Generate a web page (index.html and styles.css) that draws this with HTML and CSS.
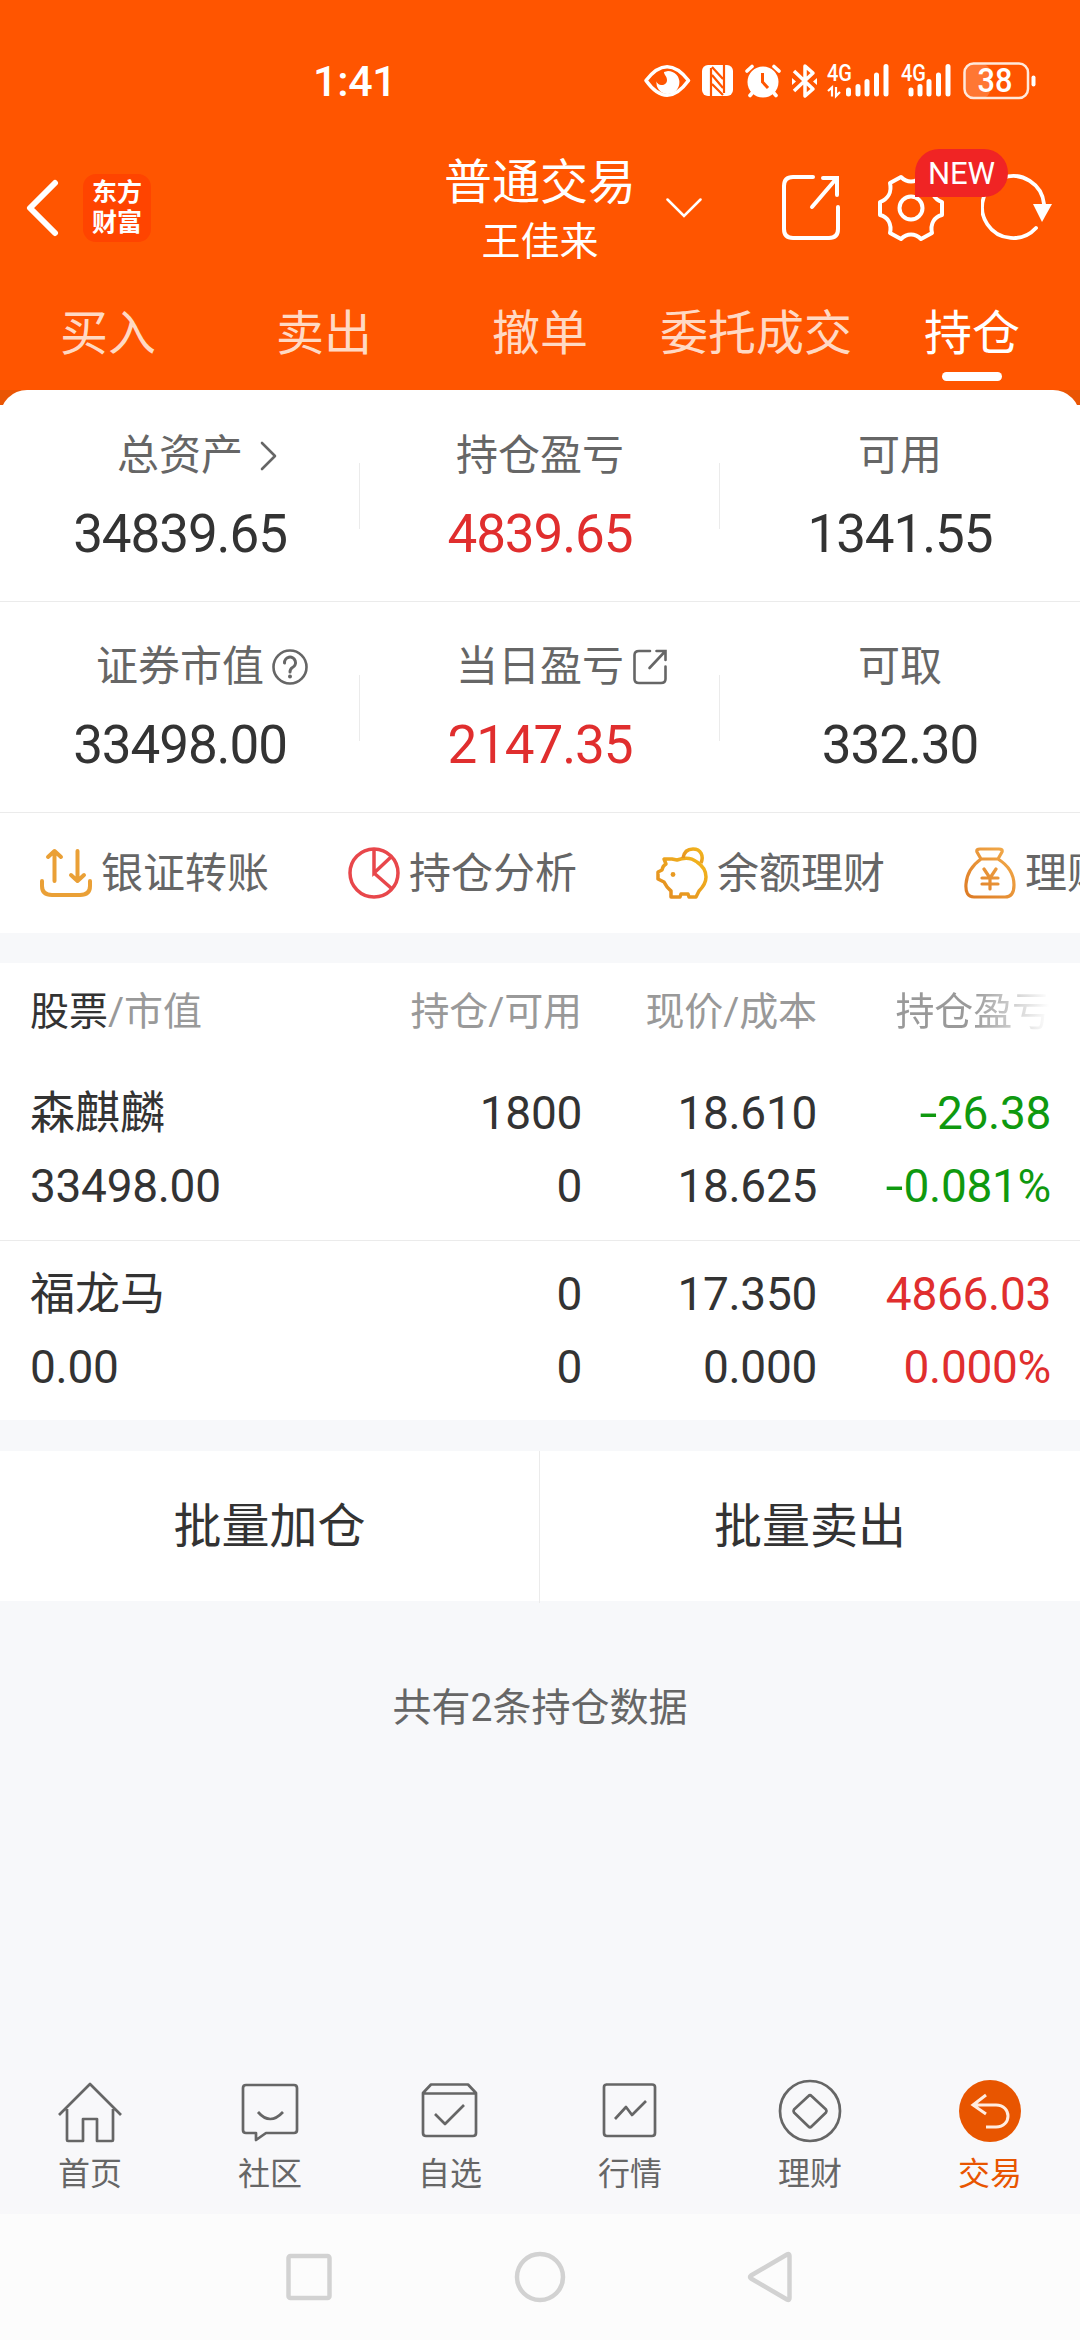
FILE: index.html
```html
<!DOCTYPE html>
<html lang="zh-CN">
<head>
<meta charset="utf-8">
<title>普通交易 - 持仓</title>
<link rel="stylesheet" href="styles.css">
</head>
<body>
<header class="top">
  <div class="status">
    <span class="clock">1:41</span>
    <svg class="status-icons" viewBox="640 55 400 50" fill="#fff">
      <path d="M646 80.500Q667 53 688.500 80.500Q667 110 646 80.500Z" fill="none" stroke="#fff" stroke-width="3.600" stroke-linejoin="round"/>
      <path d="M668 71A11.500 11.500 0 1 1 656.500 81C657 86 667 87 667 80C667 76 664 75 664 72Z"/>
      <rect x="702" y="65" width="31" height="31" rx="6"/>
      <path d="M711 68V96M724 65V93M712 67L723 79M712 75L723 88M712 84L723 95" stroke="#f50" stroke-width="2.200" fill="none"/>
      <circle cx="763" cy="82" r="15.500"/>
      <path d="M747 71L752 66.500M779 71L774 66.500M753 92L750 95.500M773 92L776 95.500" stroke="#fff" stroke-width="3.600" stroke-linecap="round"/>
      <path d="M762.500 73V82L768 88" stroke="#f50" stroke-width="3" fill="none"/>
      <path d="M794 71L813 89L805 96V66L813 73L794 91" fill="none" stroke="#fff" stroke-width="3.500" stroke-linejoin="round"/>
      <path d="M792 78L796 81.500L792 85ZM817 78L813 81.500L817 85Z"/>
      <text x="827" y="80.500" class="net" textLength="25" lengthAdjust="spacingAndGlyphs">4G</text>
      <path d="M828 91L832 87.500V96.500M836 87V96L840 92" fill="none" stroke="#fff" stroke-width="2.200"/>
      <path d="M848.500 90V94M858 86.500V94M867 81.500V94M876.500 75V94M886 66.500V94" stroke="#fff" stroke-width="5" stroke-linecap="round"/>
      <text x="901" y="80.500" class="net" textLength="25" lengthAdjust="spacingAndGlyphs">4G</text>
      <path d="M911 90V94M920 86.500V94M929 81.500V94M938.500 75V94M948 66.500V94" stroke="#fff" stroke-width="5" stroke-linecap="round"/>
      <rect x="965" y="64" width="25" height="34" rx="8" fill-opacity=".2"/>
      <rect x="964.500" y="63.500" width="63.500" height="34.500" rx="9" fill="none" stroke="#ffe9dc" stroke-width="2.500"/>
      <rect x="1031.500" y="75.500" width="4" height="11" rx="2"/>
      <text x="977.500" y="91.500" class="batt" textLength="35" lengthAdjust="spacingAndGlyphs">38</text>
    </svg>
  </div>
  <div class="titlebar">
    <div class="title-left">
      <svg class="back" viewBox="0 0 34 58"><path d="M29 4L4 29L29 54" fill="none" stroke="#fff" stroke-width="6" stroke-linecap="round" stroke-linejoin="round"/></svg>
      <div class="logo"><span>东方</span><span>财富</span></div>
    </div>
    <div class="title-mid">
      <div class="title">普通交易</div>
      <div class="account">王佳来</div>
    </div>
    <div class="title-right">
      <svg class="caret" viewBox="0 0 36 20"><path d="M1.500 1.500L18 18L34.500 1.500" fill="none" stroke="#fff" stroke-width="2.500" stroke-linecap="round"/></svg>
      <svg class="share" viewBox="0 0 60 68" fill="none" stroke="#fff" stroke-width="4" stroke-linecap="round"><path d="M32 3H12Q3 3 3 12V55Q3 64 12 64H48Q57 64 57 55V33M42 4H56V21M55 5L31 33"/></svg>
      <div class="gear-wrap">
        <svg class="gear" viewBox="0 0 68 68" fill="none" stroke="#fff" stroke-width="4" stroke-linejoin="round"><path d="M24 3C30 9 38 9 44 3L55 9C53 18 57 25 65 28V41C57 43 53 50 55 59L44 65C38 59 30 59 24 65L13 59C15 50 11 43 3 41V28C11 25 15 18 13 9Z"/><circle cx="34" cy="34" r="11.500"/></svg>
        <span class="new">NEW</span>
      </div>
      <svg class="refresh" viewBox="0 0 72 70"><path d="M55 55A31 31 0 1 1 63 31" fill="none" stroke="#fff" stroke-width="3.800" stroke-linecap="round"/><path d="M52 31H71L61 49Z" fill="#fff"/></svg>
    </div>
  </div>
  <nav class="tabs">
    <span>买入</span><span>卖出</span><span>撤单</span><span>委托成交</span><span class="on">持仓</span>
  </nav>
</header>

<div class="panel-wrap">
<section class="panel">
  <div class="sum">
    <div class="cell"><div class="label"><span>总资产</span><svg class="chev" viewBox="0 0 18 30"><path d="M2 2L15 15L2 28" fill="none" stroke="#666" stroke-width="2.600" stroke-linecap="round" stroke-linejoin="round"/></svg></div><div class="num">34839.65</div></div>
    <div class="cell"><div class="label"><span>持仓盈亏</span></div><div class="num red">4839.65</div></div>
    <div class="cell"><div class="label"><span>可用</span></div><div class="num">1341.55</div></div>
  </div>
  <div class="sum">
    <div class="cell"><div class="label"><span>证券市值</span><svg class="help" viewBox="0 0 36 36" fill="none" stroke="#666"><circle cx="18" cy="18" r="16.500" stroke-width="2.600"/><path d="M12.500 14A5.500 5.500 0 1 1 20.500 18.500Q18 20 18 23" stroke-width="3" stroke-linecap="round"/><circle cx="18" cy="27.500" r="2" fill="#666" stroke="none"/></svg></div><div class="num">33498.00</div></div>
    <div class="cell"><div class="label"><span>当日盈亏</span><svg class="ext" viewBox="0 0 34 36" fill="none" stroke="#666" stroke-width="2.600" stroke-linecap="round"><path d="M17 2H6Q1.500 2 1.500 6V30Q1.500 34 6 34H28Q32.500 34 32.500 30V17.500M23.500 2H32.500V11M31.500 3L16.500 19"/></svg></div><div class="num red">2147.35</div></div>
    <div class="cell"><div class="label"><span>可取</span></div><div class="num">332.30</div></div>
  </div>
  <div class="quick">
    <div class="q"><svg viewBox="0 0 52 52" fill="none" stroke="#eaa036" stroke-width="4" stroke-linecap="round" stroke-linejoin="round"><path d="M2 34V39Q2 48 12 48H40Q50 48 50 39V34M14.500 34V4M8 10L14.500 4L21 10M37.500 4V34M31 28L37.500 34L44 28"/></svg><span>银证转账</span></div>
    <div class="q"><svg viewBox="0 0 52 52" fill="none" stroke="#e8474b" stroke-width="3.500"><circle cx="26" cy="26" r="24"/><path d="M26 2V26L43 10M26 26L43 41"/></svg><span>持仓分析</span></div>
    <div class="q"><svg viewBox="0 0 52 52" fill="none" stroke="url(#pig)" stroke-width="3.500" stroke-linejoin="round"><defs><linearGradient id="pig" x1="1" y1="0" x2="0" y2="1"><stop offset="0" stop-color="#f3b71c"/><stop offset="1" stop-color="#e28a22"/></linearGradient></defs><path d="M8 12H16L21 13C29 10 36 11 41 15C47 19 50 24 50 30C50 36 46 41 43 44L40 50H33L32 47H25L24 50H15V44C11 41 9 37 8 35L2 32V25L6 23C7 18 9 18 10 17Z"/><path d="M27 11C28 5 32 2 37 2C45 2 48 9 45 16"/><circle cx="17" cy="27.500" r="2.400" fill="#e89a22" stroke="none"/></svg><span>余额理财</span></div>
    <div class="q"><svg viewBox="0 0 52 52" fill="none" stroke="url(#bag)" stroke-width="3.200" stroke-linejoin="round" stroke-linecap="round"><defs><linearGradient id="bag" x1="1" y1="0" x2="0" y2="1"><stop offset="0" stop-color="#f3ad4c"/><stop offset="1" stop-color="#dd7a24"/></linearGradient></defs><path d="M17 12L13 5Q12 2 16 2H35Q39 2 38 5L34 12Q50 22 50 38Q50 50 41 50H10Q1 50 2 37Q3 22 17 12H34M20 22L26 31L32 22M26 31V42M18 31H34M18 37H34"/></svg><span>理财</span></div>
  </div>
</section>
</div>

<section class="table">
  <div class="row head">
    <div><b>股票</b>/市值</div><div>持仓/可用</div><div>现价/成本</div><div class="fade">持仓盈亏</div>
  </div>
  <div class="row">
    <div><b>森麒麟</b><br>33498.00</div><div>1800<br>0</div><div>18.610<br>18.625</div><div class="green"><i>-</i>26.38<br><i>-</i>0.081%</div>
  </div>
  <div class="row line">
    <div><b>福龙马</b><br>0.00</div><div>0<br>0</div><div>17.350<br>0.000</div><div class="red">4866.03<br>0.000%</div>
  </div>
</section>

<div class="batch"><div>批量加仓</div><div>批量卖出</div></div>
<main class="count">共有2条持仓数据</main>

<footer class="bar">
  <div class="item"><svg viewBox="0 0 68 68"><path d="M3 42L34 11L65 42M11 36V67Q11 68 12 68H27V46H41V68H56Q57 68 57 67V36"/></svg><span>首页</span></div>
  <div class="item"><svg viewBox="0 0 68 68"><path d="M10 12H58Q61 12 61 15V57Q61 60 58 60H30L20 67V60H10Q7 60 7 57V15Q7 12 10 12ZM22 39Q34 53 47 39"/></svg><span>社区</span></div>
  <div class="item"><svg viewBox="0 0 68 68"><path d="M7 20L15 11.500H52L60 20V60Q60 63 57 63H10Q7 63 7 60ZM7 20.500H60M19 41L29 51L48 32"/></svg><span>自选</span></div>
  <div class="item"><svg viewBox="0 0 68 68"><path d="M10 11.500H56Q59 11.500 59 14V60Q59 63 56 63H11Q8 63 8 60V14Q8 11.500 11 11.500M19 46L30 34L36 42L50 28"/></svg><span>行情</span></div>
  <div class="item"><svg viewBox="0 0 68 68"><circle cx="34" cy="38" r="30"/><path d="M32.500 23Q34 21.500 35.500 23L50 36.500Q51 38 50 39.500L35.500 53.500Q34 55 32.500 53.500L18 39.500Q17 38 18 36.500Z"/></svg><span>理财</span></div>
  <div class="item on"><svg viewBox="0 0 68 68"><circle cx="34" cy="38" r="31" class="disc"/><path class="arrow" d="M30 22L17 32L30 41M18 32H40C56 32 56 54 40 54H30"/></svg><span>交易</span></div>
</footer>
<div class="sysnav">
  <svg viewBox="0 0 52 52"><rect x="5.500" y="5" width="41" height="42" rx="2"/></svg>
  <svg viewBox="0 0 52 52"><circle cx="26" cy="26" r="23"/></svg>
  <svg viewBox="0 0 52 52"><path d="M42 3.500Q44.500 2 44.500 5V47Q44.500 50 42 48.500L6 27.500Q4 26 6 24.500Z"/></svg>
</div>
</body>
</html>
```
FILE: styles.css
```css
* { box-sizing: border-box; }
body {
  margin: 0;
  width: 1080px;
  height: 2340px;
  overflow: hidden;
  display: flex;
  flex-direction: column;
  background: #f7f8fa;
  color: #333;
  font-family: Roboto, "Noto Sans CJK SC", sans-serif;
}
svg { display: block; flex: none; }
.red { color: #e02e2e; }
.green { color: #0f990f; }

.top { height: 390px; background: #f50; color: #fff; display: flex; flex-direction: column; }
.status { height: 136px; padding: 55px 40px 0 313px; display: flex; justify-content: space-between; }
.clock { font-size: 43px; line-height: 52px; font-weight: 500; letter-spacing: -.3px; }
.status-icons { width: 400px; height: 50px; }
.net { font: 500 23px Roboto, sans-serif; }
.batt { font: 500 33px Roboto, sans-serif; }

.titlebar { height: 144px; display: grid; grid-template-columns: 1fr 200px 1fr; align-items: center; }
.title-left { display: flex; align-items: center; padding-left: 26px; gap: 23px; }
.back { width: 34px; height: 58px; }
.logo {
  width: 68px; height: 68px; border-radius: 13px; background: #ff4400;
  display: flex; flex-direction: column; align-items: center; justify-content: center;
  font-size: 25px; line-height: 30px; font-weight: 700;
}
.title-mid { text-align: center; padding-top: 4px; }
.title { font-size: 48px; line-height: 64px; }
.account { font-size: 39px; line-height: 54px; }
.title-right { display: flex; align-items: center; padding-left: 26px; }
.caret { width: 36px; height: 20px; }
.share { width: 60px; height: 68px; margin-left: 79px; }
.gear-wrap { position: relative; margin-left: 36px; }
.gear { width: 68px; height: 68px; }
.new {
  position: absolute; left: 38px; top: -25px; width: 93px; height: 48px;
  border-radius: 24px 24px 24px 0; background: #f02424;
  font-size: 31px; line-height: 50px; text-align: center;
}
.refresh { width: 72px; height: 70px; margin-left: 36px; }

.tabs { height: 110px; display: grid; grid-template-columns: repeat(5, 216px); }
.tabs span {
  font-size: 48px; line-height: 72px; padding-top: 18px; color: #ffd9c4;
  display: flex; flex-direction: column; align-items: center;
}
.tabs .on { color: #fff; }
.tabs .on::after { content: ""; width: 60px; height: 9px; border-radius: 5px; background: #fff; margin-top: 2px; }

.panel-wrap { background: linear-gradient(#ea5504 15px, #fff 15px); }
.panel { height: 543px; background: #fff; border-radius: 27px 27px 0 0; overflow: hidden; }
.sum { height: 211px; display: grid; grid-template-columns: repeat(3, 360px); }
.sum + .sum { height: 212px; border-top: 1px solid #ebebeb; border-bottom: 1px solid #ebebeb; }
.cell { padding-top: 37px; background: linear-gradient(#ebebeb, #ebebeb) 359px 73px / 1px 66px no-repeat; }
.sum + .sum .cell { padding-top: 36px; }
.cell:last-child { background: none; }
.label { display: grid; grid-template-columns: 1fr auto 1fr; align-items: center; font-size: 42px; line-height: 58px; color: #666; }
.label span { grid-column: 2; }
.num { text-align: center; font-size: 53px; line-height: 80px; margin-top: 9px; letter-spacing: -1.1px; }
.chev { width: 18px; height: 30px; margin-left: 17px; }
.help { width: 36px; height: 36px; margin-left: 8px; }
.ext { width: 34px; height: 36px; margin-left: 9px; }

.quick { height: 120px; padding-left: 40px; display: flex; gap: 79px; font-size: 42px; line-height: 60px; color: #666; white-space: nowrap; }
.q { display: flex; align-items: center; gap: 9px; flex: none; }
.q svg { width: 52px; height: 52px; }
.q span { padding-top: 2px; }

.table { margin-top: 30px; background: #fff; font-size: 46px; letter-spacing: -.3px; }
.row {
  display: grid; grid-template-columns: 281px 271px 235px 234px; padding: 17px 29px 16px 30px;
  height: 180px; line-height: 73px; text-align: right;
}
.row div:first-child { text-align: left; }
.row.line { border-top: 1px solid #ebebeb; }
.row b { font-weight: 400; font-size: 45px; letter-spacing: 0; }
.head { height: 97px; padding: 13px 29px 12px 30px; font-size: 39px; color: #999; letter-spacing: -.1px; }
.head b { font-size: 39px; color: #333; }
.fade { background: linear-gradient(90deg, #999 155px, #fff 232px); background-clip: text; color: transparent; }
.row i { font-style: normal; display: inline-block; transform: scaleX(1.4); margin-right: 3px; }

.batch { margin-top: 31px; height: 150px; background: #fff; display: grid; grid-template-columns: 540px 540px; font-size: 48px; line-height: 152px; text-align: center; }
.batch div:first-child { border-right: 1px solid #ebebeb; }
.count { flex: 1; padding-top: 78px; font-size: 39px; line-height: 58px; text-align: center; color: #666; }

.bar { height: 144px; background: #f8f8fa; display: grid; grid-template-columns: repeat(6, 180px); color: #666; font-size: 32px; line-height: 44px; }
.item { display: flex; flex-direction: column; align-items: center; gap: 9px; padding-top: 1px; }
.item svg { width: 68px; height: 72px; overflow: visible; fill: none; stroke: #666; stroke-width: 2.700; stroke-linejoin: round; }
.item.on { color: #e85500; }
.item .disc { fill: #e85500; stroke: none; }
.item .arrow { stroke: #ffece0; stroke-width: 3; stroke-linejoin: miter; }

.sysnav { height: 126px; background: #fcfcfc; display: flex; align-items: center; justify-content: center; gap: 179px; }
.sysnav svg { width: 52px; height: 52px; fill: none; stroke: #d2d2d2; stroke-width: 4.500; stroke-linejoin: round; }
```
